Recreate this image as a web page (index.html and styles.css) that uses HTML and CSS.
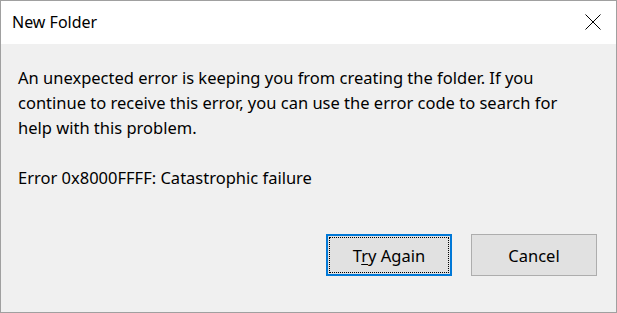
FILE: index.html
```html
<!DOCTYPE html>
<html lang="en">
<head>
    <meta charset="UTF-8">
    <title>New Folder</title>
    <link rel="stylesheet" href="styles.css">
</head>
<body>
    <div class="dialog">
        <div class="title-bar">
            <span class="title">New Folder</span>
            <svg class="close" width="16" height="16" viewBox="0 0 16 16">
                <path d="M0.5 0.5 L15.5 15.5 M15.5 0.5 L0.5 15.5" stroke="#000" stroke-width="1" fill="none"/>
            </svg>
        </div>
        <div class="content">
            <p class="message">An unexpected error is keeping you from creating the folder. If you continue to receive this error, you can use the error code to search for help with this problem.</p>
            <p class="message">Error 0x8000FFFF: Catastrophic failure</p>
        </div>
        <div class="buttons">
            <button class="btn btn-default">T<u>r</u>y Again</button>
            <button class="btn">Cancel</button>
        </div>
    </div>
</body>
</html>
```

FILE: styles.css
```css
body {
    margin: 0;
    font-family: "Noto Sans", "Open Sans", sans-serif;
    color: #000;
}
.dialog {
    width: 617px;
    height: 313px;
    box-sizing: border-box;
    border: 1px solid #a0a0a0;
    background-color: #f0f0f0;
    display: flex;
    flex-direction: column;
}
.title-bar {
    height: 43px;
    background-color: #fff;
    display: flex;
    align-items: center;
    justify-content: space-between;
    padding: 0 15px 0 11px;
}
.title {
    font-size: 16px;
    margin-top: -2px;
}
.close {
    margin-top: -1px;
}
.content {
    padding: 21px 45px 0 17px;
}
.message {
    margin: 0 0 25px 0;
    font-size: 16.5px;
    line-height: 25px;
}
.buttons {
    display: flex;
    justify-content: flex-end;
    gap: 19px;
    padding: 19px 19px 0 0;
}
.btn {
    width: 126px;
    height: 42px;
    font-family: inherit;
    font-size: 16.5px;
    color: #000;
    background-color: #e1e1e1;
    border: 1px solid #adadad;
    border-radius: 0;
    padding: 0;
}
.btn-default {
    border: 2px solid #0078d7;
    outline: 1px dotted #000;
    outline-offset: -4px;
}
.btn u {
    text-underline-offset: 2px;
}
```
